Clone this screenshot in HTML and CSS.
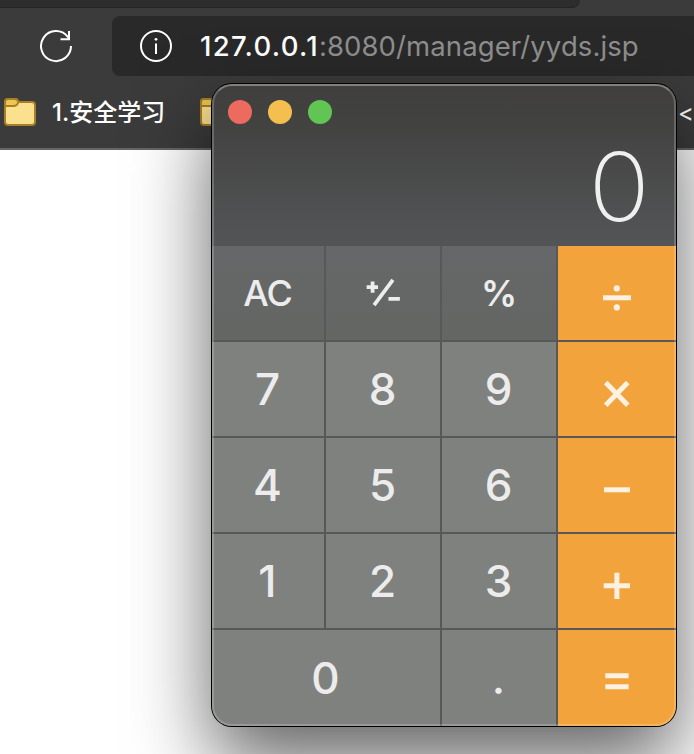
FILE: index.html
```html
<!DOCTYPE html>
<html lang="zh-CN">
<head>
<meta charset="utf-8">
<title>yyds.jsp</title>
<link rel="stylesheet" href="styles.css">
</head>
<body>
<div class="browser">
  <div class="tabs"></div>
  <div class="toolbar">
    <svg class="reload" width="34" height="34" viewBox="0 0 34 34"><path d="M32 17A15 15 0 1 1 28.800 7.800L30 9.800M30 2V10.200H21.500"/></svg>
    <div class="address">
      <svg class="info" width="34" height="34" viewBox="0 0 34 34"><circle cx="17" cy="17" r="15"/><path d="M17 14.500V25"/><circle class="dot" cx="17" cy="10.300" r="1.400"/></svg>
      <div class="url"><span class="host">127.0.0.1</span><span class="path">:8080/manager/yyds.jsp</span></div>
    </div>
  </div>
  <div class="bookmarks">
    <svg class="folder" width="32" height="28" viewBox="0 0 32 28"><path class="front" d="M1 6V24Q1 27 4 27H28Q31 27 31 24V7Q31 4 28 4H15L12.500 1H4Q1 1 1 4Z"/><path class="tab" d="M1 8V4Q1 1 4 1H11Q13 1 14.500 4Q13 8 10.500 8Z"/></svg>
    <span class="label">1.安全学习</span>
    <svg class="folder second" width="32" height="28" viewBox="0 0 32 28"><path class="front" d="M1 6V24Q1 27 4 27H28Q31 27 31 24V7Q31 4 28 4H15L12.500 1H4Q1 1 1 4Z"/><path class="tab" d="M1 8V4Q1 1 4 1H11Q13 1 14.500 4Q13 8 10.500 8Z"/></svg>
    <span class="code">&lt;/</span>
  </div>
  <div class="page"></div>
</div>

<div class="calculator">
  <div class="display">
    <div class="lights"><i class="close"></i><i class="minimize"></i><i class="zoom"></i></div>
    <div class="result">0</div>
  </div>
  <div class="keys">
    <div class="key fn">AC</div>
    <div class="key fn"><svg width="114" height="94" viewBox="0 0 114 94"><path class="sign" d="M41 41H52.500M47 35.300V46.700M63 53H74.500"/><path class="slash" d="M48.500 59.200L67.500 33.800"/></svg></div>
    <div class="key fn percent">%</div>
    <div class="key op"><svg width="118" height="94" viewBox="0 0 118 94"><path d="M45 51.800H73"/><circle cx="58.800" cy="42.400" r="3.100"/><circle cx="58.800" cy="61.400" r="3.100"/></svg></div>
    <div class="key">7</div><div class="key">8</div><div class="key">9</div>
    <div class="key op"><svg width="118" height="94" viewBox="0 0 118 94"><path d="M47.700 40.500L69.800 63.200M69.800 40.500L47.700 63.200"/></svg></div>
    <div class="key">4</div><div class="key">5</div><div class="key">6</div>
    <div class="key op"><svg width="118" height="94" viewBox="0 0 118 94"><path d="M46 51.800H72"/></svg></div>
    <div class="key">1</div><div class="key">2</div><div class="key">3</div>
    <div class="key op"><svg width="118" height="94" viewBox="0 0 118 94"><path d="M45.700 51.800H72M58.900 38.800V65"/></svg></div>
    <div class="key zero">0</div><div class="key">.</div>
    <div class="key op"><svg width="118" height="96" viewBox="0 0 118 96"><path d="M47.300 45.700H70.600M47.300 56.800H70.600"/></svg></div>
  </div>
</div>
</body>
</html>
```
FILE: styles.css
```css
* { box-sizing: border-box; }
body {
  margin: 0;
  width: 694px;
  height: 754px;
  overflow: hidden;
  position: relative;
  background: #fff;
  font-family: Inter, "Noto Sans CJK SC", sans-serif;
}
.browser { height: 754px; background: #3b3b3b; display: flex; flex-direction: column; overflow: hidden; }
.tabs {
  width: 580px;
  height: 8px;
  background: #2d2d2d;
  border-bottom: 1px solid #242424;
  border-radius: 0 0 8px 0;
}
.toolbar { display: flex; align-items: center; height: 76px; padding-left: 39px; }
.reload, .info { fill: none; stroke: #fff; stroke-width: 2; flex: none; }
.reload { margin-right: 39px; }
.info .dot { fill: #fff; stroke: none; }
.address {
  display: flex;
  align-items: center;
  flex: 1;
  height: 60px;
  padding-left: 27px;
  background: #292929;
  border-radius: 8px 0 0 8px;
}
.url { margin-left: 27px; font-size: 27.5px; line-height: 60px; white-space: nowrap; color: #8f8f8f; }
.host { color: #fff; font-weight: 500; letter-spacing: 1.300px; }
.path { letter-spacing: .1px; }
.bookmarks {
  display: flex;
  align-items: center;
  height: 66px;
  padding: 0 0 10px 4px;
  border-bottom: 2px solid #666;
  color: #fff;
  font-size: 24px;
  white-space: nowrap;
}
.folder { flex: none; margin-top: 2px; }
.front { fill: #fbe08e; stroke: #a87e26; stroke-width: 2; }
.tab { fill: #ecc753; stroke: #a87e26; stroke-width: 2; }
.label { flex: none; width: 148px; margin: -2px 0 0 16px; font-weight: 500; }
.code { flex: none; margin: 2px 0 0 446px; }
.page { flex: 1; background: #fff; }

.calculator {
  position: absolute;
  left: 212px;
  top: 84px;
  width: 464px;
  height: 642px;
  border-radius: 20px;
  overflow: hidden;
  background: #57585a;
  box-shadow: 0 0 0 1px #000, 0 36px 80px rgba(0, 0, 0, .62);
}
.calculator::after {
  content: "";
  position: absolute;
  inset: 0;
  border-radius: 20px;
  border: 2px solid rgba(255, 255, 255, .2);
  border-top-color: rgba(255, 255, 255, .34);
}
.display {
  height: 162px;
  padding: 16px 26px 0 16px;
  background: linear-gradient(#403f3d 0, #424241 24%, #4a4c4b 60%, #505153 82%, #535456);
}
.lights { display: flex; gap: 16px; }
.lights i { width: 24px; height: 24px; border-radius: 50%; }
.close { background: #ed6a5e; }
.minimize { background: #f5bf4f; }
.zoom { background: #61c554; }
.result {
  height: 125px;
  line-height: 125px;
  font-size: 95px;
  font-weight: 230;
  text-align: right;
  color: #efefef;
  transform: scaleX(1.07);
  transform-origin: right;
}
.keys {
  display: grid;
  grid-template-columns: 112px 114px 114px 118px;
  grid-template-rows: repeat(4, 94px) 96px;
  gap: 2px;
}
.key {
  display: flex;
  align-items: center;
  justify-content: center;
  padding-right: 1px;
  background: #7f817f;
  color: #ececec;
  font-size: 44px;
  font-weight: 460;
}
.fn { background: linear-gradient(#666769, #656766 45%, #646664); font-size: 36px; letter-spacing: -1px; }
.percent { font-weight: 560; }
.op { background: #f2a33c; padding: 0; }
.zero { grid-column: span 2; }
.key svg { display: block; fill: none; }
.op svg { stroke: #fdf1e1; stroke-width: 5; }
.op circle { fill: #fdf1e1; stroke: none; }
.sign, .slash { stroke: #ececec; stroke-width: 3.800; }
```
